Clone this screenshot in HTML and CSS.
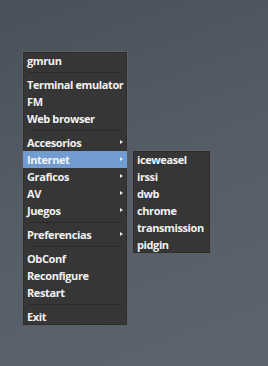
FILE: index.html
```html
<!DOCTYPE html>
<html>
<head>
<meta charset="utf-8">
<link rel="stylesheet" href="styles.css">
</head>
<body>
<div class="desktop">
  <div class="menu main">
    <div class="item">gmrun</div>
    <div class="sep"></div>
    <div class="item">Terminal emulator</div>
    <div class="item">FM</div>
    <div class="item">Web browser</div>
    <div class="sep"></div>
    <div class="item sub">Accesorios</div>
    <div class="item sub active">Internet
      <div class="menu submenu">
        <div class="item">iceweasel</div>
        <div class="item">irssi</div>
        <div class="item">dwb</div>
        <div class="item">chrome</div>
        <div class="item">transmission</div>
        <div class="item">pidgin</div>
      </div>
    </div>
    <div class="item sub">Graficos</div>
    <div class="item sub">AV</div>
    <div class="item sub">Juegos</div>
    <div class="sep"></div>
    <div class="item sub">Preferencias</div>
    <div class="sep"></div>
    <div class="item">ObConf</div>
    <div class="item">Reconfigure</div>
    <div class="item">Restart</div>
    <div class="sep"></div>
    <div class="item">Exit</div>
  </div>
</div>
</body>
</html>
```
FILE: styles.css
```css
html, body {
  margin: 0;
  padding: 0;
}
body {
  width: 268px;
  height: 366px;
  overflow: hidden;
  background: linear-gradient(160deg, #48515a 0%, #545d67 45%, #5c656f 100%);
  font-family: "Open Sans", "DejaVu Sans", sans-serif;
  font-weight: bold;
  font-size: 11px;
  letter-spacing: -0.4px;
  color: #f2f2f2;
}
.desktop {
  padding: 51px 0 0 22px;
  display: flex;
  align-items: flex-start;
}
.menu {
  background: #363636;
  border: 1px solid #5e5e5e;
  box-shadow: inset 0 0 0 1px #2e2e2e;
  display: flex;
  flex-direction: column;
}
.main {
  width: 104px;
}
.item {
  position: relative;
  height: 17px;
  line-height: 17px;
  padding-left: 4px;
  white-space: nowrap;
}
.sub::after {
  content: "";
  position: absolute;
  right: 4px;
  top: 6px;
  border-left: 3px solid #eaeaea;
  border-top: 2.5px solid transparent;
  border-bottom: 2.5px solid transparent;
}
.active {
  background: #709cd2;
}
.sep {
  height: 7px;
  display: flex;
  align-items: center;
  padding: 0 5px 0 6px;
}
.sep::before {
  content: "";
  flex: 1;
  height: 1px;
  background: #2a2a2a;
}
.submenu {
  position: absolute;
  left: 109px;
  top: -1px;
  width: 77px;
}
.submenu .item {
  padding-left: 4px;
}
```
